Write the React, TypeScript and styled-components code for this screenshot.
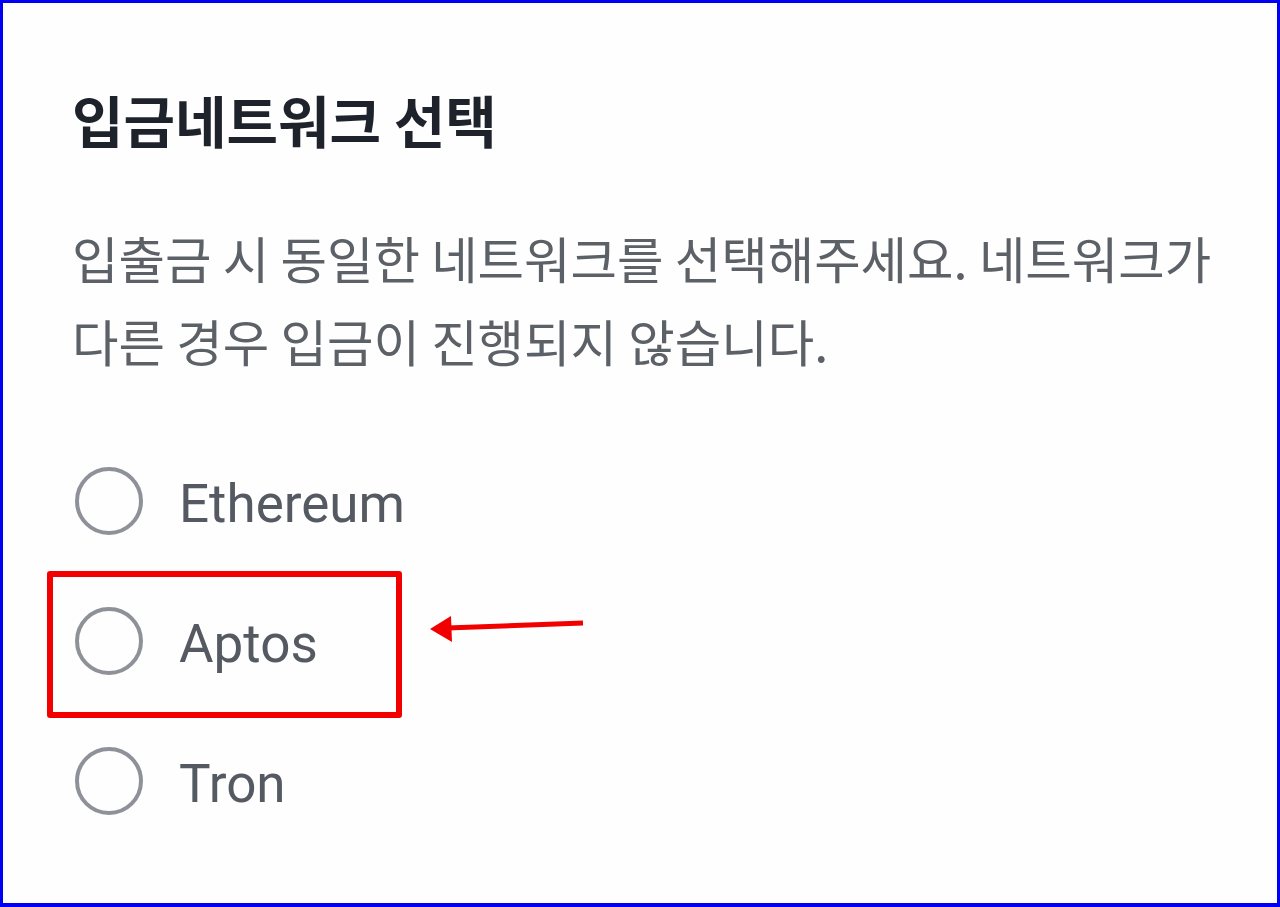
import React from "react";
import styled, { createGlobalStyle } from "styled-components";

const Global = createGlobalStyle`
  html, body { margin: 0; padding: 0; background: #ffffff; }
  body { font-family: "Noto Sans CJK KR", "Noto Sans", sans-serif; }
`;

const Frame = styled.div`
  position: relative;
  box-sizing: border-box;
  width: 1280px;
  height: 907px;
  border-style: solid;
  border-color: #0000f2;
  border-width: 3px 3px 4px 3px;
  background: #fefefe;
  padding: 78px 0 0 69px;
  overflow: hidden;
`;

const Title = styled.h1`
  margin: 0;
  font-family: "Noto Sans CJK KR", sans-serif;
  font-weight: 700;
  font-size: 56px;
  line-height: 76px;
  color: #1e222b;
  letter-spacing: 0;
`;

const Description = styled.p`
  margin: 59px 0 0 0;
  font-family: "Noto Sans CJK KR", sans-serif;
  font-weight: 400;
  font-size: 50.5px;
  line-height: 83px;
  color: #5c6067;
  width: 1170px;
  word-break: keep-all;
`;

const Options = styled.div`
  display: flex;
  flex-direction: column;
  gap: 72px;
  margin-top: 85px;
`;

const Option = styled.label`
  display: flex;
  align-items: center;
  gap: 36px;
  height: 68px;
  padding-left: 3px;
`;

const Circle = styled.span`
  box-sizing: border-box;
  width: 68px;
  height: 68px;
  border-radius: 50%;
  border: 4px solid #8e9197;
  flex: none;
`;

const Label = styled.span`
  font-family: Roboto, "Noto Sans", sans-serif;
  font-size: 53px;
  line-height: 68px;
  margin-top: 6px;
  color: #555a62;
`;

const Highlight = styled.div`
  position: absolute;
  left: 44px;
  top: 568px;
  width: 355px;
  height: 147px;
  box-sizing: border-box;
  border: 6px solid #f20000;
  border-radius: 3px;
`;

const Arrow = styled.svg`
  position: absolute;
  left: 422px;
  top: 603px;
`;

const networks = ["Ethereum", "Aptos", "Tron"];

export default function App() {
  return (
    <>
      <Global />
      <Frame>
        <Title>입금네트워크 선택</Title>
        <Description>
          입출금 시 동일한 네트워크를 선택해주세요. 네트워크가 다른 경우 입금이 진행되지 않습니다.
        </Description>
        <Options>
          {networks.map((n) => (
            <Option key={n}>
              <Circle />
              <Label>{n}</Label>
            </Option>
          ))}
        </Options>
        <Highlight />
        <Arrow width="165" height="40" viewBox="0 0 165 40">
          <line x1="158" y1="17" x2="22" y2="22" stroke="#f20000" strokeWidth="5" />
          <polygon points="5,23 26,10 27,36" fill="#f20000" />
        </Arrow>
      </Frame>
    </>
  );
}
